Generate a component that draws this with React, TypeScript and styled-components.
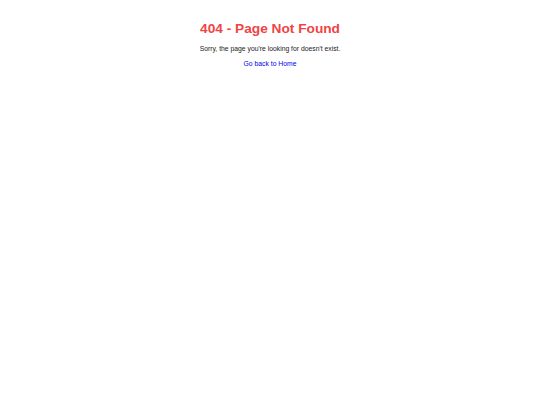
import React from "react";
import styled, { createGlobalStyle } from "styled-components";

const GlobalStyle = createGlobalStyle`
  body {
    margin: 0;
    background: #ffffff;
    font-family: "Liberation Sans", Arial, sans-serif;
  }
`;

const Wrapper = styled.div`
  display: flex;
  flex-direction: column;
  align-items: center;
  text-align: center;
  padding-top: 21px;
`;

const Title = styled.h1`
  margin: 0;
  font-size: 13.7px;
  font-weight: 700;
  color: #ef4444;
`;

const Message = styled.p`
  margin: 9px 0 0;
  font-size: 6.8px;
  color: #222222;
`;

const HomeLink = styled.a`
  margin-top: 8px;
  font-size: 6.8px;
  color: #0000ee;
  text-decoration: underline;
`;

export default function App() {
  return (
    <>
      <GlobalStyle />
      <Wrapper>
        <Title>404 - Page Not Found</Title>
        <Message>Sorry, the page you're looking for doesn't exist.</Message>
        <HomeLink href="/">Go back to Home</HomeLink>
      </Wrapper>
    </>
  );
}
